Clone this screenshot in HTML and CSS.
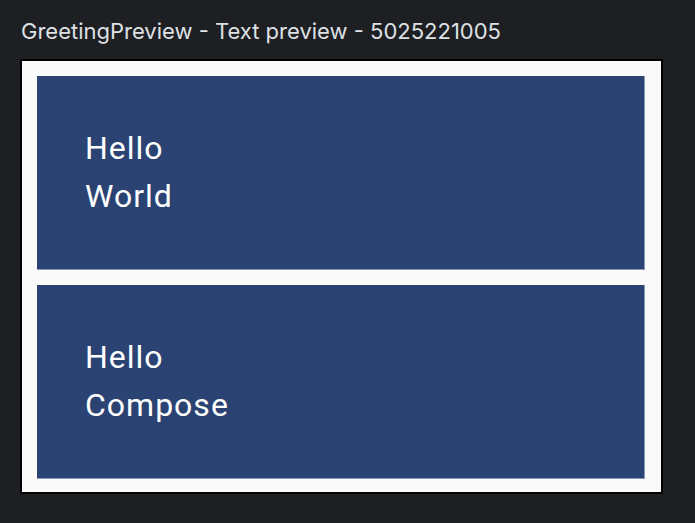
FILE: index.html
```html
<!DOCTYPE html>
<html lang="en">
<head>
  <meta charset="UTF-8">
  <meta name="viewport" content="width=device-width, initial-scale=1">
  <title>GreetingPreview</title>
  <link rel="stylesheet" href="styles.css">
</head>
<body>

  <h2 class="title">GreetingPreview - Text preview - 5025221005</h2>

  <!-- Preview frame -->
  <div class="frame">
    <div class="card">
      <p>Hello</p>
      <p>World</p>
    </div>
    <div class="card">
      <p>Hello</p>
      <p>Compose</p>
    </div>
  </div>

</body>
</html>
```

FILE: styles.css
```css
body {
  font-family: Inter, "Noto Sans", sans-serif;
  background: #1e1f22;
  margin: 0;
  padding: 0 0 0 20px;
}

.title {
  margin: 0;
  padding: 18px 0 0 1px;
  height: 59px;
  box-sizing: border-box;
  font-size: 22px;
  font-weight: 400;
  color: #dfe1e5;
}

.frame {
  width: 643px;
  height: 435px;
  box-sizing: border-box;
  border: 2px solid #000;
  background: #fafafa;
  padding: 15px 16px 13px 15px;
  display: flex;
  flex-direction: column;
  gap: 15px;
}

.card {
  flex: 1;
  background: #2a4373;
  border-right: 1px solid #8c99b4;
  border-bottom: 1px solid #8c99b4;
  padding: 48px 48px 46px;
  font-family: Roboto, sans-serif;
  font-size: 32px;
  line-height: 48px;
  letter-spacing: 1px;
  color: #fff;
}

.card p {
  margin: 0;
}
```
